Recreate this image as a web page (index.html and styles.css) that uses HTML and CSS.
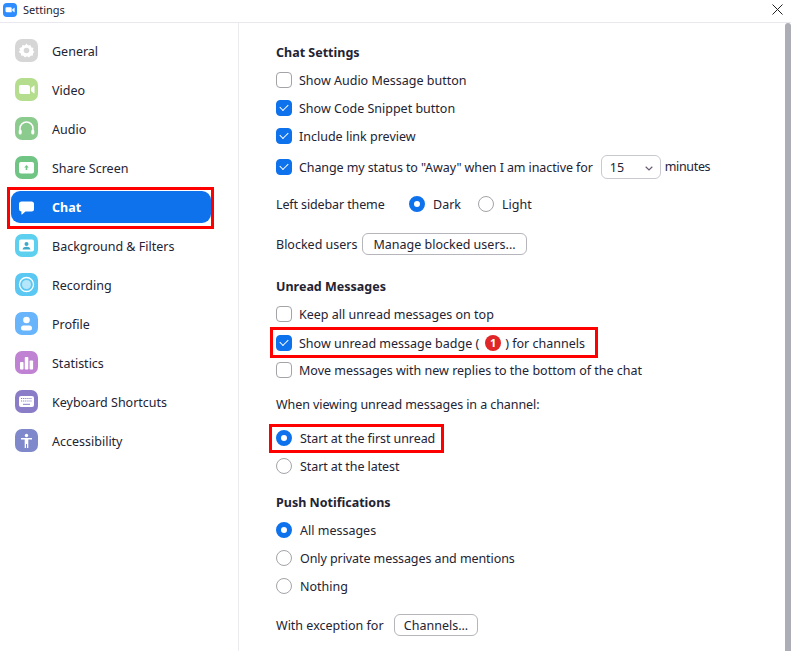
FILE: index.html
```html
<!DOCTYPE html>
<html lang="en">
<head>
<meta charset="utf-8">
<title>Settings</title>
<link rel="stylesheet" href="styles.css">
</head>
<body>
<div class="window">
  <header class="titlebar">
    <svg class="app-icon" viewBox="0 0 14 14"><rect width="14" height="14" rx="4" fill="#2d8cff"/><path d="M2.500 5.200a.9.9 0 0 1 .9-.9h4.300a1 1 0 0 1 1 1v3.600a.4.4 0 0 1-.4.4H3.900a1.400 1.400 0 0 1-1.400-1.400zM9.300 6.200l2-1.500c.2-.1.3 0 .3.200v4.200c0 .2-.1.300-.3.200l-2-1.500z" fill="#fff"/></svg>
    <span class="title">Settings</span>
    <svg class="close" viewBox="0 0 11 11"><path d="M.5.5l10 10M10.500.5l-10 10" stroke="#222" fill="none"/></svg>
  </header>
  <div class="body">
    <nav class="sidebar">
      <a class="nav-item"><svg class="nav-icon" viewBox="0 0 23 23"><rect width="23" height="23" rx="7" fill="#d6d6d6"/><path d="M11.500 4.500l1.500 2 2.400-.6.700 2.400 2.400.7-.6 2.500 1.500 1.500-1.500 1.500.1 2-2.300.3-1.700 1.700-2-1.200-2 1.200-1.700-1.700-2.300-.3.100-2L3.500 13l1.500-1.500-.6-2.500 2.400-.7.700-2.400 2.400.6z" fill="#fff"/><circle cx="11.500" cy="11.500" r="2.800" fill="#d6d6d6"/></svg><span>General</span></a>
      <a class="nav-item"><svg class="nav-icon" viewBox="0 0 23 23"><rect width="23" height="23" rx="7" fill="#b5dd8e"/><path d="M4 8.500A1.500 1.500 0 0 1 5.500 7h7A2.500 2.500 0 0 1 15 9.500v6a.500.500 0 0 1-.500.500h-8A2.500 2.500 0 0 1 4 13.500zM16 10l2.800-2.300c.4-.3.700-.1.700.3v7c0 .4-.3.600-.7.300L16 13z" fill="#fff"/></svg><span>Video</span></a>
      <a class="nav-item"><svg class="nav-icon" viewBox="0 0 23 23"><rect width="23" height="23" rx="7" fill="#8ccb8e"/><path d="M5 14v-2.500a6.500 6.500 0 0 1 13 0V14" fill="none" stroke="#fff" stroke-width="1.500"/><rect x="3.700" y="12.500" width="3" height="5" rx="1.500" fill="#fff"/><rect x="16.300" y="12.500" width="3" height="5" rx="1.500" fill="#fff"/></svg><span>Audio</span></a>
      <a class="nav-item"><svg class="nav-icon" viewBox="0 0 23 23"><rect width="23" height="23" rx="7" fill="#70c585"/><rect x="4" y="6" width="15" height="11.500" rx="2" fill="#fff"/><path d="M11.500 9l2.300 2.400h-1.500V14h-1.600v-2.600H9.200z" fill="#70c585"/></svg><span>Share Screen</span></a>
      <div class="nav-active-wrap">
        <a class="nav-item active"><svg class="nav-icon" viewBox="0 0 23 23"><path d="M6.500 5.500h10a2.500 2.500 0 0 1 2.500 2.500v5a2.500 2.500 0 0 1-2.500 2.500h-6L7 18.500c-.3.200-.6 0-.6-.3v-2.700A2.500 2.500 0 0 1 4 13V8a2.500 2.500 0 0 1 2.500-2.500z" fill="#fff"/></svg><span>Chat</span></a>
      </div>
      <a class="nav-item"><svg class="nav-icon" viewBox="0 0 23 23"><rect width="23" height="23" rx="7" fill="#5dd0ef"/><rect x="4" y="5.500" width="15" height="12" rx="2" fill="#fff"/><circle cx="11.500" cy="10" r="2" fill="#3fa9c9"/><path d="M7.500 15.500c.3-2 2-2.700 4-2.700s3.700.7 4 2.700z" fill="#3fa9c9"/></svg><span>Background &amp; Filters</span></a>
      <a class="nav-item"><svg class="nav-icon" viewBox="0 0 23 23"><rect width="23" height="23" rx="7" fill="#5bc8f3"/><circle cx="11.500" cy="11.500" r="7" fill="none" stroke="#fff" stroke-width="1.300"/><circle cx="11.500" cy="11.500" r="4.500" fill="#fff" opacity=".55"/></svg><span>Recording</span></a>
      <a class="nav-item"><svg class="nav-icon" viewBox="0 0 23 23"><rect width="23" height="23" rx="7" fill="#68b5fc"/><circle cx="11.500" cy="8" r="3.300" fill="#fff"/><rect x="6" y="13.500" width="11" height="5" rx="2.500" fill="#fff"/></svg><span>Profile</span></a>
      <a class="nav-item"><svg class="nav-icon" viewBox="0 0 23 23"><rect width="23" height="23" rx="7" fill="#c083d4"/><rect x="5" y="11" width="3.500" height="7.500" rx=".8" fill="#fff"/><rect x="9.800" y="6" width="3.500" height="12.500" rx=".8" fill="#fff"/><rect x="14.600" y="9.500" width="3.500" height="9" rx=".8" fill="#fff"/></svg><span>Statistics</span></a>
      <a class="nav-item"><svg class="nav-icon" viewBox="0 0 23 23"><rect width="23" height="23" rx="7" fill="#8b7cc8"/><rect x="4" y="6" width="15" height="11" rx="2" fill="#fff"/><path d="M6 8.500h11M6 11h11" stroke="#8b7cc8" stroke-dasharray="1.200 .9"/><path d="M8 14.300h7" stroke="#8b7cc8"/></svg><span>Keyboard Shortcuts</span></a>
      <a class="nav-item"><svg class="nav-icon" viewBox="0 0 23 23"><rect width="23" height="23" rx="7" fill="#7f88cb"/><circle cx="11.500" cy="6.500" r="1.700" fill="#fff"/><path d="M6 9h11v1.500h-3.700V19h-1.300v-4h-1v4H9.700v-8.500H6z" fill="#fff"/></svg><span>Accessibility</span></a>
    </nav>
    <main class="content">
      <h2 class="row heading"><span>Chat Settings</span></h2>
      <label class="row"><i class="box"></i><span>Show Audio Message button</span></label>
      <label class="row"><i class="box on"></i><span>Show Code Snippet button</span></label>
      <label class="row"><i class="box on"></i><span>Include link preview</span></label>
      <div class="row m3"><i class="box on"></i><span class="tighter">Change my status to "Away" when I am inactive for</span>
        <span class="select">15<svg class="chev" viewBox="0 0 8 5"><path d="M.7.8L4 4 7.300.8" fill="none" stroke="#6a5a72" stroke-width="1.200"/></svg></span>
        <span class="after-select">minutes</span></div>
      <div class="row m9"><span class="theme-label">Left sidebar theme</span><i class="radio on"></i><span class="theme-dark">Dark</span><i class="radio"></i><span class="theme-light">Light</span></div>
      <div class="row m12"><span class="blocked-label">Blocked users</span><span class="btn btn-wide">Manage blocked users...</span></div>
      <h2 class="row heading m14"><span>Unread Messages</span></h2>
      <label class="row"><i class="box"></i><span>Keep all unread messages on top</span></label>
      <label class="row m1 mark mark-check"><i class="box on"></i><span>Show unread message badge (</span><b class="badge">1</b><span>) for channels</span></label>
      <label class="row short"><i class="box"></i><span>Move messages with new replies to the bottom of the chat</span></label>
      <div class="row m7"><span class="tight">When viewing unread messages in a channel:</span></div>
      <label class="row m6 mark mark-radio"><i class="radio on"></i><span class="radio-text tight">Start at the first unread</span></label>
      <label class="row"><i class="radio"></i><span class="radio-text tight">Start at the latest</span></label>
      <h2 class="row heading m8"><span>Push Notifications</span></h2>
      <label class="row"><i class="radio on"></i><span class="radio-text">All messages</span></label>
      <label class="row"><i class="radio"></i><span class="radio-text tight">Only private messages and mentions</span></label>
      <label class="row"><i class="radio"></i><span class="radio-text">Nothing</span></label>
      <div class="row m11"><span class="except-label">With exception for</span><span class="btn btn-small">Channels...</span></div>
    </main>
    <div class="scrollbar"><div class="thumb"></div></div>
  </div>
</div>
</body>
</html>
```
FILE: styles.css
```css
*, *::before, *::after { box-sizing: border-box; }
html, body { margin: 0; height: 100%; overflow: hidden; background: #fff; }
body { font: 12.5px/18px "Noto Sans", "Open Sans", sans-serif; color: #232333; }
.window { display: flex; flex-direction: column; height: 651px; }
.titlebar { display: flex; align-items: center; height: 23px; flex: none; padding: 0 8px 3px 3px; border-bottom: 1px solid #e8e8ee; }
.app-icon { width: 14px; height: 14px; margin-right: 6px; }
.title { font-size: 11px; flex: 1; }
.close { width: 11px; height: 11px; }
.body { display: flex; flex: 1; min-height: 0; }
.sidebar { width: 239px; flex: none; border-right: 1px solid #ececf0; padding-top: 8px; display: flex; flex-direction: column; }
.nav-item { display: flex; align-items: center; height: 39px; padding-left: 15px; flex: none; }
.nav-item > span { padding-top: 2px; }
.nav-icon { width: 23px; height: 23px; margin-right: 14px; flex: none; }
.nav-active-wrap { margin: 0 24px -3px 7px; height: 42px; flex: none; border: 3px solid #f00; padding: 1px 0 3px 1px; display: flex; }
.nav-item.active { flex: 1; height: 32px; padding-left: 4px; background: #0e72ed; border-radius: 9px; color: #fff; font-weight: 700; margin: 0; }
.content { flex: 1; padding: 15px 0 0 37px; }
.row { display: flex; align-items: center; height: 28px; margin: 0; font-size: 12.5px; font-weight: 400; position: relative; }
.row > span { padding-top: 2px; }
.heading { font-weight: 700; font-size: 12.5px; }
.tight { letter-spacing: -.08px; }
.tighter { letter-spacing: -.1px; }
.m1 { margin-top: 1px; } .m3 { margin-top: 3px; } .m6 { margin-top: 6px; } .m7 { margin-top: 7px; } .m8 { margin-top: 8px; } .m9 { margin-top: 9px; } .m11 { margin-top: 11px; } .m12 { margin-top: 12px; } .m14 { margin-top: 14px; }
.short { height: 26px; }
.box { width: 16px; height: 16px; border: 1.5px solid #a3a3a8; border-radius: 4px; margin-right: 7px; flex: none; background: #fff; position: relative; }
.box.on { background: #0e72ed; border-color: #0e72ed; }
.box.on::after { content: ""; position: absolute; left: 2.500px; top: 2.500px; width: 8px; height: 5px; border-left: 1.300px solid #fff; border-bottom: 1.300px solid #fff; transform: rotate(-45deg); }
.radio { width: 16px; height: 16px; border: 1.500px solid #a3a3a8; border-radius: 50%; flex: none; background: #fff; }
.radio.on { border: 5px solid #0e72ed; }
.radio-text { margin-left: 8px; }
.row > .select { display: flex; align-items: center; justify-content: space-between; width: 60px; height: 24px; margin-left: 8px; padding: 2px 7px 0 8px; border: 1px solid #c9c9d0; border-radius: 6px; }
.chev { width: 8px; height: 5px; }
.row > .after-select { margin-left: 4px; margin-top: -1px; padding-top: 0; letter-spacing: -.35px; }
.theme-label { width: 133px; letter-spacing: -.12px; }
.theme-dark { margin-left: 8px; width: 45px; }
.theme-light { margin-left: 8px; }
.blocked-label { width: 86px; }
.btn { display: flex; align-items: center; justify-content: center; height: 22px; border: 1px solid #b5b5bb; border-radius: 6px; background: #fff; }
.btn-wide { width: 165px; }
.except-label { width: 118px; }
.btn-small { width: 84px; }
.badge { width: 16px; height: 16px; margin: 0 4px 0 6px; border-radius: 8px; background: #e02626; color: #fff; font: 700 11px/16px "Noto Sans", sans-serif; text-align: center; }
.mark::before { content: ""; position: absolute; border: 3px solid #f00; pointer-events: none; }
.mark-check::before { left: -6px; top: -2px; width: 328px; height: 31px; }
.mark-radio::before { left: -7px; top: 0; width: 175px; height: 29px; }
.scrollbar { width: 6px; flex: none; }
.thumb { height: 100%; background: #adadb5; border-radius: 3px 3px 0 0; }
```
